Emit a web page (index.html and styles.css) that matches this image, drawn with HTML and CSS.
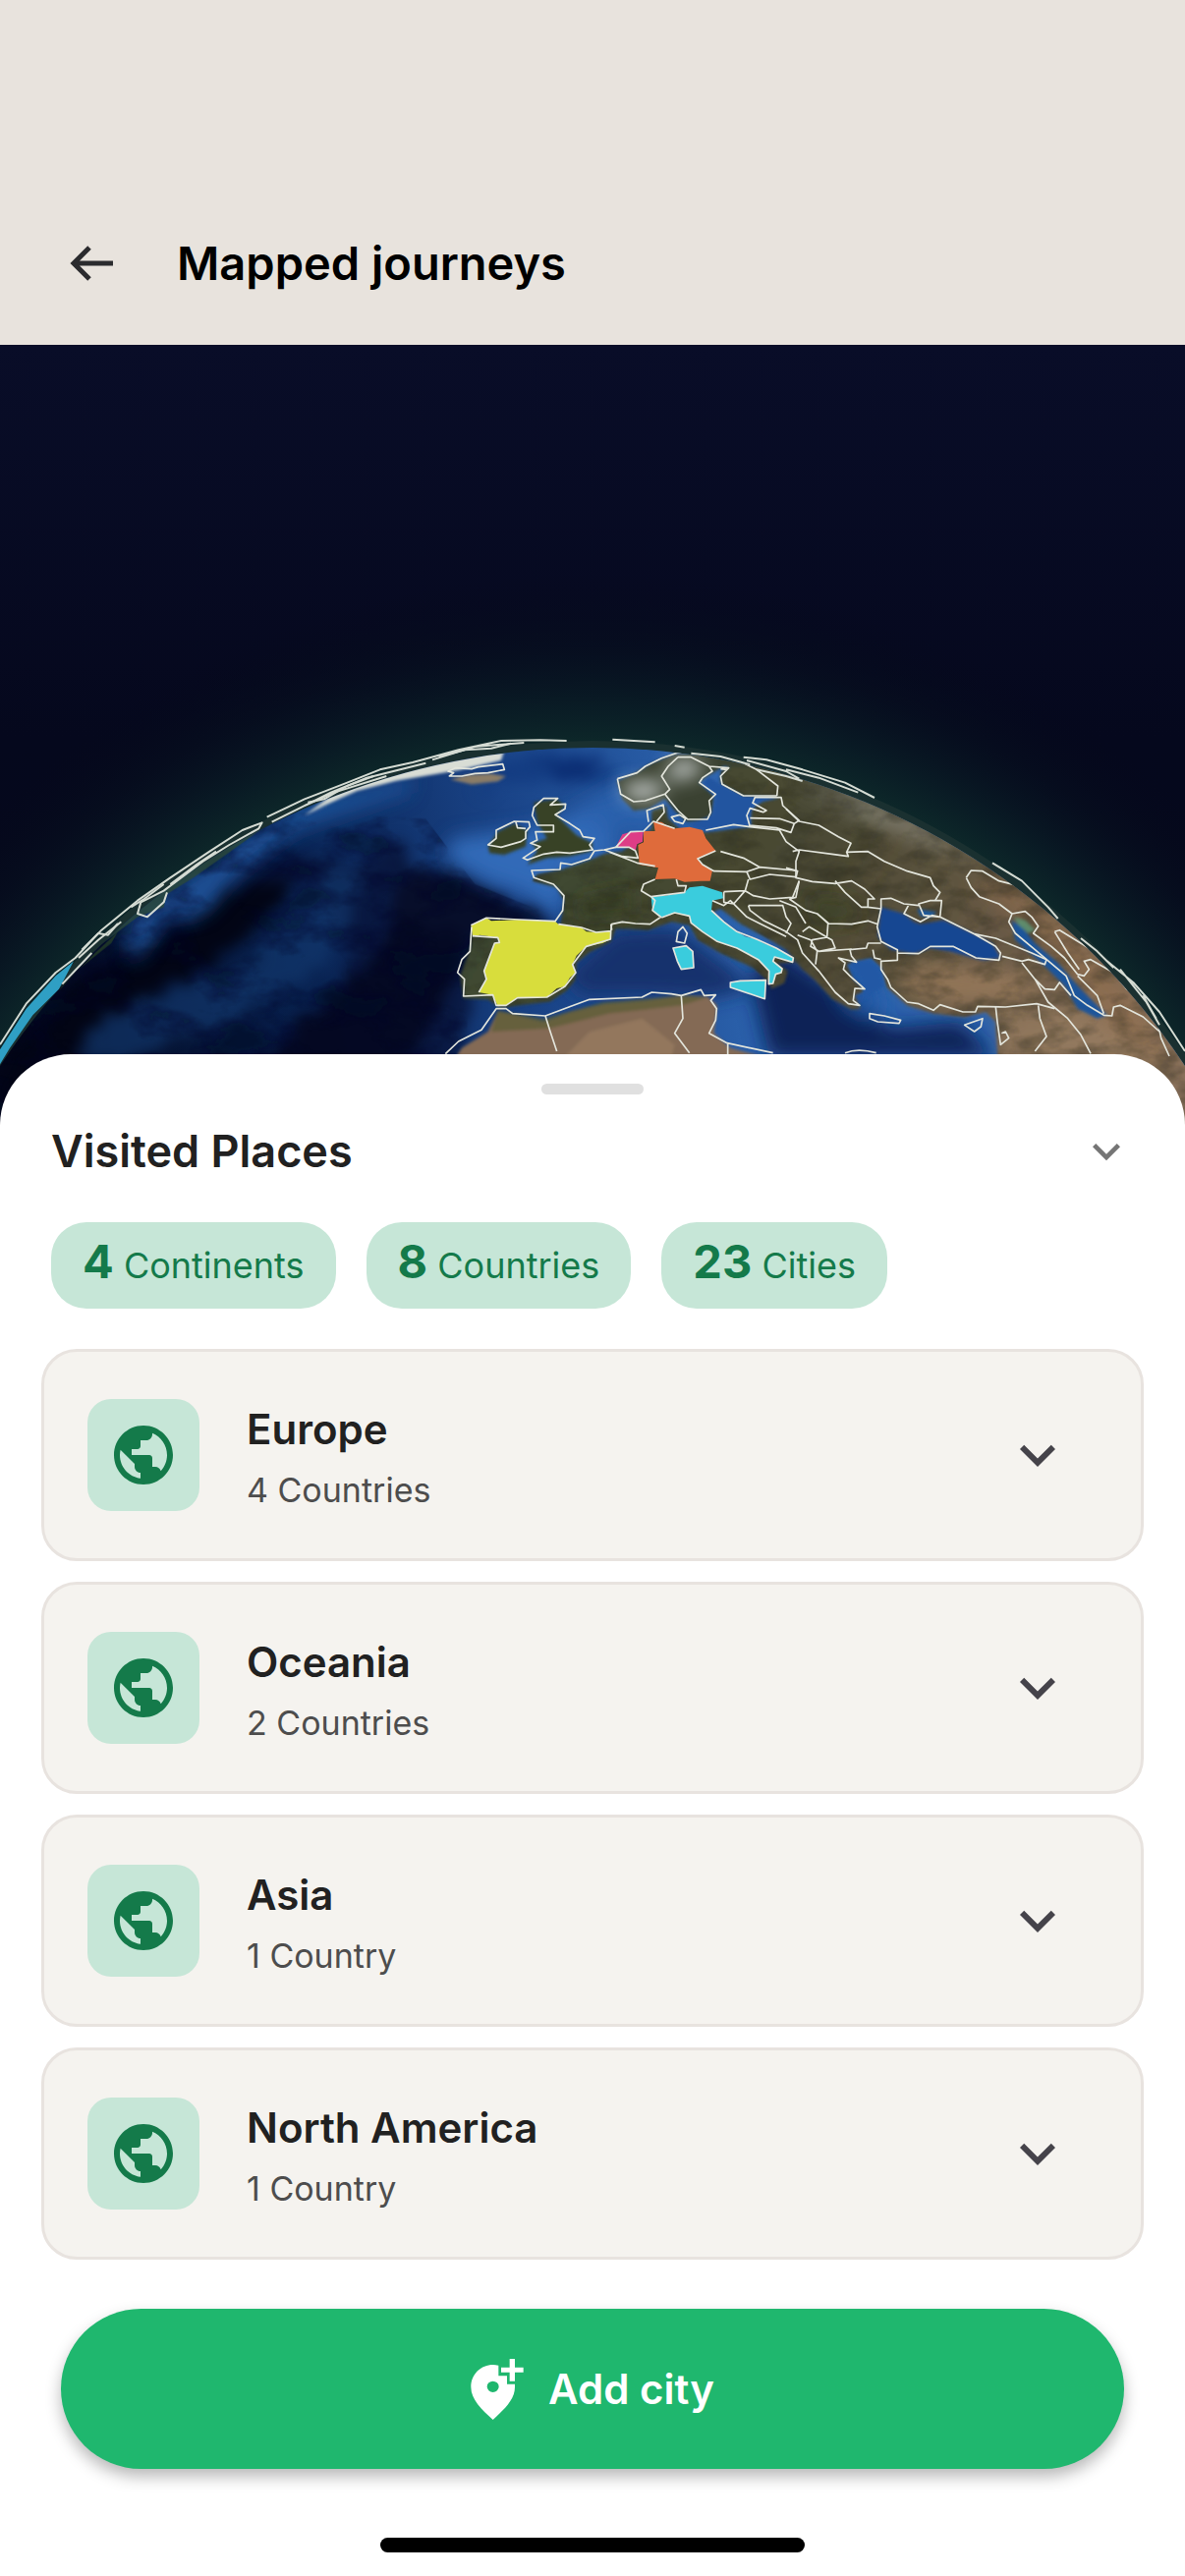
FILE: index.html
```html
<!DOCTYPE html>
<html lang="en">
<head>
  <meta charset="UTF-8" />
  <meta name="viewport" content="width=device-width, initial-scale=1.0"/>
  <title>Mapped journeys</title>
  <link rel="stylesheet" href="styles.css">
</head>

<body>

  <!-- Shared icons -->
  <svg class="sprite" aria-hidden="true">
    <symbol id="icon-globe" viewBox="0 0 24 24">
      <path d="M12 2C6.48 2 2 6.48 2 12s4.48 10 10 10 10-4.48 10-10S17.52 2 12 2zm-1 17.93c-3.95-.49-7-3.85-7-7.93 0-.62.08-1.21.21-1.79L9 15v1c0 1.1.9 2 2 2v1.93zm6.9-2.54c-.26-.81-1-1.39-1.9-1.39h-1v-3c0-.55-.45-1-1-1H8v-2h2c.55 0 1-.45 1-1V7h2c1.1 0 2-.9 2-2v-.41c2.93 1.19 5 4.06 5 7.41 0 2.08-.8 3.97-2.1 5.39z"/>
    </symbol>
    <symbol id="icon-chevron" viewBox="0 0 24 24">
      <path d="M16.59 8.59L12 13.17 7.41 8.59 6 10l6 6 6-6z"/>
    </symbol>
  </svg>

  <header class="app-bar">
    <a class="back-link" href="#" aria-label="Back">
      <svg viewBox="0 0 44 36"><path d="M20 2L4 18l16 16M4 18h40"/></svg>
    </a>
    <h1>Mapped journeys</h1>
  </header>

  <section class="globe" aria-label="Globe with visited countries">
    <svg viewBox="0 1053 3618 2400">
      <defs>
        <linearGradient id="sky" x1="0" y1="0" x2="0" y2="1">
          <stop offset="0" stop-color="#090d28"/>
          <stop offset=".5" stop-color="#05081d"/>
          <stop offset="1" stop-color="#05081a"/>
        </linearGradient>
        <radialGradient id="glow" gradientUnits="userSpaceOnUse" cx="1809" cy="4452" r="2700">
          <stop offset=".81" stop-color="#0d2729"/>
          <stop offset=".85" stop-color="#0a1e26" stop-opacity=".9"/>
          <stop offset=".92" stop-color="#07101f" stop-opacity=".6"/>
          <stop offset="1" stop-color="#05081a" stop-opacity="0"/>
        </radialGradient>
        <linearGradient id="ocean" gradientUnits="userSpaceOnUse" x1="0" y1="3000" x2="2200" y2="2500">
          <stop offset="0" stop-color="#030619"/>
          <stop offset=".4" stop-color="#08214f"/>
          <stop offset=".72" stop-color="#1a4488"/>
          <stop offset="1" stop-color="#2c63ae"/>
        </linearGradient>
        <linearGradient id="land" gradientUnits="userSpaceOnUse" x1="500" y1="100" x2="2300" y2="1000">
          <stop offset="0" stop-color="#3d4730"/>
          <stop offset=".45" stop-color="#4c4a34"/>
          <stop offset=".75" stop-color="#6b5b47"/>
          <stop offset="1" stop-color="#88705a"/>
        </linearGradient>
        <clipPath id="disc"><circle cx="1809" cy="4452" r="2169"/></clipPath>
        <filter id="soft" x="-20%" y="-20%" width="140%" height="140%"><feGaussianBlur stdDeviation="28"/></filter>
        <filter id="edge" x="-5%" y="-5%" width="110%" height="110%"><feGaussianBlur stdDeviation="5"/></filter>
        <filter id="rough" x="-10%" y="-10%" width="120%" height="120%" color-interpolation-filters="sRGB">
          <feTurbulence type="fractalNoise" baseFrequency=".02" numOctaves="4" seed="4"/>
          <feDisplacementMap in="SourceGraphic" scale="90" xChannelSelector="R" yChannelSelector="G"/>
          <feGaussianBlur stdDeviation="20"/>
        </filter>
        <filter id="terrain" x="0" y="0" width="100%" height="100%">
          <feTurbulence type="fractalNoise" baseFrequency=".01 .02" numOctaves="4" seed="9"/>
          <feColorMatrix values="0 0 0 0 .02  0 0 0 0 .02  0 0 0 0 .01  2 0 0 0 -.8"/>
          <feComposite in2="SourceGraphic" operator="in"/>
        </filter>
        <filter id="seabed" x="0" y="0" width="100%" height="100%">
          <feTurbulence type="fractalNoise" baseFrequency=".005 .009" numOctaves="5" seed="21"/>
          <feColorMatrix values="0 0 0 0 0  0 0 0 0 .003  0 0 0 0 .02  3 0 0 0 -1.3"/>
          <feComposite in2="SourceGraphic" operator="in"/>
        </filter>
      </defs>

      <rect y="1053" width="3618" height="2400" fill="url(#sky)"/>
      <rect y="1053" width="3618" height="2400" fill="url(#glow)"/>
      <circle cx="1809" cy="4452" r="2190" fill="#33423f" opacity=".35"/>

      <g clip-path="url(#disc)">
        <rect y="2200" width="3618" height="1300" fill="url(#ocean)"/>

        <!-- deep water and currents -->
        <g filter="url(#rough)">
          <path fill="#020515" d="M0 3300L200 3010 400 2890 560 2830 640 2760 680 2700 900 2640 860 2760 640 2960 460 3020 250 3170 100 3453H0z"/>
          <path fill="#081338" opacity=".8" d="M640 2700L820 2600 1120 2640 1180 2560 1250 2600 1220 2720 1350 2800 1650 2760 1690 2830 1440 3010 1400 3240 1330 3453 840 3453 880 3140 1050 3020 1060 2850 900 2700z"/>
          <path fill="#040820" opacity=".9" d="M850 3200L1000 3040 1130 2940 1210 2790 1500 2710 1640 2800 1440 2850 1380 3010 1300 3160 1250 3240 950 3300 700 3260z"/>
          <path fill="#070e2a" d="M1230 2640L1420 2670 1560 2740 1690 2810 1590 2830 1400 2860 1200 2800z"/>
          <path fill="#123a80" opacity=".8" d="M1500 2330L1720 2290 1880 2360 1830 2390 1640 2370 1450 2420z"/>
          <path fill="#0a2a70" opacity=".8" d="M1640 2320L1830 2320 1810 2380 1690 2380z"/>
          <path fill="#12396f" opacity=".65" d="M500 3040L740 2950 860 2820 960 2660 1100 2660 1080 2810 960 2970 700 3120 480 3200 250 3260 250 3180 400 3060z"/>
        </g>
        <g filter="url(#soft)">
          <path fill="#1d5094" d="M330 2830L560 2690 730 2560 940 2440 1260 2370 1250 2420 900 2540 720 2680 620 2790 500 2810 430 2920 390 2930 390 2860z"/>
          <path fill="#316bb8" d="M1380 2560L1620 2530 1810 2470 1890 2580 1850 2630 1740 2650 1710 2800 1600 2730 1480 2690 1360 2620z"/>
          <path fill="#2d64b0" opacity=".8" d="M1740 2480L1900 2390 2040 2420 2010 2540 1900 2530 1830 2560z"/>
          <path fill="#15316d" d="M1720 2980L1880 2840 2060 2830 2250 2970 2290 3020 2170 3050 1960 3040 1780 3040z"/>
          <path fill="#0b2356" d="M2290 2980L2380 2900 2550 3020 2720 3140 2930 3120 3040 3230H2350z"/>
          <path fill="#2259a4" d="M2520 2950L2620 2930 2690 3070 2650 3110 2580 3070z"/>
        </g>
        <path filter="url(#seabed)" opacity=".6" d="M0 3453V2900L500 2650 900 2480 1300 2500 1450 2700 1700 2800 1450 2850 1400 3453z"/>

        <!-- Greenland ice at the horizon -->
        <path fill="#d9ddd5" filter="url(#edge)" d="M930 2490L1010 2430 1140 2370 1260 2345 1420 2312 1540 2290 1530 2322 1400 2352 1210 2384 1090 2415 990 2460z"/>
        <path fill="#2c4a3b" opacity=".8" d="M330 2850L430 2750 560 2660 680 2590 800 2530 690 2610 590 2680 510 2730 500 2770 420 2800 300 2890z"/>
        <path fill="#2a4527" d="M190 3010L290 2910 360 2845 340 2880 240 2960 180 3025z" opacity=".7"/>

        <g transform="translate(1200 2190)">
          <g filter="url(#edge)">
            <path id="mass" fill="url(#land)" d="M425 500L500 520 522 560 512 630 480 640 285 635 240 660 238 700 205 790 215 858 290 862 330 888 380 880 480 868 530 835 558 800 560 750 600 718 665 685 680 645 780 650 850 625 905 635 930 680 1000 720 1100 765 1150 810 1155 830 1195 812 1205 775 1170 752 1232 748 1120 700 1075 675 1010 630 975 595 1000 585 1060 630 1130 668 1200 710 1250 770 1290 805 1340 860 1400 893 1428 890 1410 850 1440 835 1405 800 1385 755 1460 735 1490 765 1508 825 1570 880 1650 905 1745 915 1810 900 1840 930 1860 1300H2450V500L1700 100 1180 130 1090 120 1000 165 1000 205 1070 243 1182 245 1130 255 1090 285 1095 335 955 352 880 345 840 310 835 270 790 285 790 340 700 410 650 415 610 432 515 465 440 480z"/>
            <path fill="#3b4332" d="M685 195L700 250 735 285 780 280 830 250 860 285 895 318 960 318 975 290 980 240 935 200 960 180 1010 150 1200 160 1080 110 950 108 860 112 790 140 740 170z"/>
            <path fill="#394326" d="M430 260L500 250 525 270 500 300 560 360 610 385 605 410 540 425 470 430 410 450 440 410 425 385 470 370 440 320zM290 395L320 350 370 325 410 345 405 395 340 420 295 415z"/>
            <path fill="#8b7d66" d="M175 190L230 175 300 172 345 180 320 196 240 205z"/>
            <path fill="#846b54" d="M165 1080L210 1010 290 960 320 898 380 910 460 930 540 900 650 875 770 866 880 850 960 852 990 880 980 965 1030 1010 1180 1050 1200 1100z"/>
            <path fill="#5a5b35" opacity=".7" d="M320 895L460 920 640 870 880 850 960 855 880 880 660 905 480 950 300 960z"/>
            <path fill="#9c7f64" opacity=".6" d="M480 1080L600 960 760 920 860 1000 840 1080z"/>
          </g>

          <!-- snow, highlands and dry plateaus -->
          <g filter="url(#soft)">
            <path fill="#dfe3e4" opacity=".9" d="M700 205L800 195 835 225 770 255 710 240zM840 140L920 130 950 165 850 195z"/>
            <path fill="#a3a19a" opacity=".6" d="M1200 180L1420 240 1620 330 1800 450 1640 390 1440 310z"/>
            <path fill="#9b7c5c" opacity=".8" d="M1520 780L1640 750 1860 770 1960 800 1980 860 1740 880 1600 860z"/>
            <path fill="#94714f" opacity=".6" d="M1760 500L1900 520 2060 640 2250 840 2380 1060 2280 1060 2120 860 1960 660z"/>
            <path fill="#a08466" opacity=".6" d="M1850 900L2100 880 2360 1060H1870z"/>
            <path fill="#333c20" opacity=".6" d="M1260 540L1400 560 1430 620 1300 640zM560 560L740 520 740 600 570 620z"/>
          </g>
          <use href="#mass" filter="url(#terrain)" opacity=".5"/>

          <!-- inland seas -->
          <g filter="url(#edge)">
            <path fill="#174792" d="M1490 580L1560 600 1590 625 1610 632 1680 620 1760 655 1830 690 1855 735 1800 742 1700 715 1640 705 1590 722 1520 710 1480 670z"/>
            <path fill="#1c5a9c" d="M1600 585L1660 595 1640 612 1610 608z"/>
            <path fill="#1b549a" d="M1888 620L1920 640 1960 690 2030 750 2090 820 2140 870 2180 910 2150 920 2090 890 2050 820 1990 760 1900 680z"/>
            <path fill="#5e9a78" opacity=".8" d="M1895 610L1930 620 1960 650 1940 660 1910 635z"/>
            <path fill="#2455a0" d="M1000 205L1070 243 1175 245 1100 262 1085 330 1000 338 950 345 900 330 975 300 985 240 945 200 965 182z"/>
            <path fill="#2159a5" d="M1395 750L1455 740 1485 765 1500 820 1440 860 1430 800z"/>
          </g>

          <!-- visited countries -->
          <path fill="#d8dd3c" d="M238 635L285 613 300 622 385 618 495 623 505 632 575 642 590 655 620 657 665 653 664 678 640 690 590 700 560 728 548 755 558 780 540 795 525 822 500 828 470 855 380 857 345 880 320 883 305 848 262 840 285 800 278 775 290 745 310 690 325 688 320 673 265 665 243 670z"/>
          <path fill="#de3d86" d="M680 397L700 358 725 350 764 348 762 380 745 388 740 408 720 397z"/>
          <path fill="#df6b3b" d="M795 318L820 320 835 330 860 340 905 335 945 345 955 370 985 408 930 432 945 450 975 468 968 500 940 500 890 503 860 493 800 495 810 460 752 450 748 390 765 382 765 348 800 348z"/>
          <path fill="#3accdd" d="M788 548L830 545 860 540 890 535 905 520 945 515 1005 535 1008 553 975 560 972 590 1010 625 1050 655 1075 670 1110 678 1130 690 1170 705 1222 735 1220 748 1165 732 1160 745 1188 768 1185 780 1168 785 1160 813 1147 815 1148 775 1115 740 1050 705 990 685 945 655 910 628 905 607 860 597 820 612 792 590zM855 705L895 698 915 715 918 765 880 770 868 745zM1030 810L1060 805 1138 803 1135 860 1100 848 1030 825z"/>

          <g class="borders">
            <path d="M238 635L285 613 385 618 495 623 518 590 522 545 490 510 430 490 423 468 510 465 512 445 545 450 600 432 615 408 645 405 680 397M505 632L575 642 620 657 665 653 668 632 700 625 740 630 785 632 815 612M665 653L664 678 590 700 548 755 558 780 525 822 470 855 380 857 345 880 315 880 305 848 215 852 218 800 197 780 210 740 235 715 240 640M262 840L285 800 278 775 310 690 325 688 320 673 243 668"/>
            <path d="M440 330L425 300 430 275 460 248 503 248 480 268 527 265 525 280 495 298 540 325 570 345 580 365 615 370 600 390 610 405 540 415 500 412 460 418 410 436 397 430 450 395 420 385 440 375 435 350 490 350 490 330zM290 390L315 370 315 345 370 318 415 320 418 335 405 350 405 370 390 380 330 397zM375 320L380 338 405 340"/>
            <path d="M168 165L190 155 240 158 260 152 335 143 340 160 290 170 250 172 210 180 172 180 185 170z"/>
            <path d="M685 188L745 170 770 150 820 125 870 108 950 110 980 122 1050 130 1110 160 1175 210 1172 240M685 188L695 235 735 258 770 255 830 235 850 260 870 285 900 312 960 312 970 290 965 255 985 235 935 200 945 185 975 165 965 150 910 122 870 122M830 235L845 220 820 180 840 150 870 122M1000 158L1020 160M965 150L1025 155 1000 180 1005 205 1070 240 1172 240M780 320L775 285 825 267 828 290 805 318M850 305L875 298 893 310 885 325 860 318zM860 340L795 318 765 348 725 350 680 397 720 397 740 408 748 430 700 425 645 405M660 412L745 445 800 455"/>
            <path d="M955 345L1040 328 1090 335 1180 345 1200 380 1240 410 1230 440 1230 468 1120 458 1070 430 1000 410M1090 335L1080 300 1090 278 1130 290 1140 285 1098 262 1105 245 1185 245 1190 270 1240 315 1225 325 1180 310 1090 308M1090 330L1170 338 1215 352 1225 325M985 408L930 432 945 450 980 470 1080 472 1120 458M1230 468L1230 488 1150 480 1090 495 1080 472M1085 495L1075 530 1010 533M800 495L765 510 758 530 788 548 890 535 895 515 870 515 865 495M1075 530L1100 545 1150 555 1220 550 1240 500M1010 533L1010 565 1040 570 1075 530M975 560L1010 575 1030 560 1060 590 1080 610 1130 635 1200 670M1085 575L1190 575 1200 610 1215 630 1200 660M1085 575L1090 590 1130 620 1200 655M1180 560L1230 580 1260 630M870 655L885 640 898 660 890 690 865 685zM665 632L668 650M788 548L800 560 792 590 820 612"/>
            <path d="M855 705L895 698 915 715 918 765 880 770 868 745zM1030 810L1060 805 1138 803 1135 860 1100 848 1030 825zM972 590L1010 625 1050 655 1110 678 1170 705 1222 735 1220 748 1165 732 1160 745 1188 768 1185 780 1168 785 1160 813 1147 815 1148 775 1115 740 1050 705 990 685 945 655 910 628 905 607 860 597 820 612"/>
            <path d="M160 1028L200 990 270 955 315 890 345 890 365 905 465 912 480 960 500 1020M465 912L545 882 600 862 760 855 790 840 850 845 880 850 940 832 950 850 985 848 970 865 988 890 985 925 965 965 1020 995 1160 1025M880 850L885 920 860 965 905 1025M1022 995V1030"/>
            <path d="M1200 280L1240 318 1300 330 1360 365 1398 385 1385 412 1390 425 1340 418 1240 405 1220 410M1200 460L1235 470 1230 490 1280 502 1350 508 1400 500 1440 525 1470 555 1450 555 1450 580 1490 585 1490 555 1520 553 1560 570 1605 575M1385 412L1450 410 1500 440 1570 470 1640 490 1650 515 1670 535 1655 560 1675 560 1670 610 1620 605 1605 570 1640 560 1660 560M1350 500L1380 535 1430 580 1450 580M1240 500L1230 550 1210 555M1210 555L1260 590 1295 600 1330 630 1400 632 1450 622 1480 632M1490 585L1478 640 1490 685 1540 710 1540 742 1490 745 1490 770 1510 800 1520 825 1570 870 1605 875 1650 895 1670 878 1740 900 1778 900 1785 883 1870 885 1965 875 2020 890M1490 690L1450 690 1445 705 1395 710 1400 730 1415 748 1360 735 1380 750 1375 770 1395 790 1440 830 1410 828 1405 865 1425 880 1390 875 1350 840 1300 775 1250 720 1235 680 1200 655M1235 665L1275 680 1295 715 1290 755M1250 655L1270 640 1325 672 1280 680 1275 700 1300 715 1350 705 1340 680 1325 672 1328 630 1295 600M1300 715L1400 708M1540 720L1605 722 1640 700 1710 700 1780 735 1850 742 1855 720 1840 700 1775 662 1670 610 1645 605 1610 625 1560 600 1575 572M1775 662L1840 675 1950 720 1995 740 1990 755 1940 740 1920 745 1860 730M1465 710L1470 735 1490 740"/>
            <path d="M1750 490L1765 468 1800 470 1850 500 1910 515 1900 505 1825 455 1818 440 1850 450 1910 500 1970 545 2000 580 2025 615M1750 490L1765 520 1790 548 1850 570 1890 600 1930 593 1950 610 1970 638 1955 660 2010 700 2050 735 2090 785 2110 790 2125 770 2110 745 2130 740 2200 780 2240 830 2300 870 2330 910 2345 980 2370 1035M1890 600L1880 625 1900 660 1960 710 2055 790 2080 850 2120 880 2170 910 2195 912 2200 885 2220 880 2290 915 2340 960M2170 905L2150 850 2090 790M2020 655L2035 650 2140 715 2180 740 2220 790 2280 850 2340 930 2418 1020M2020 655L2060 720 2095 770M1920 750L1960 800 1990 830 2020 832 2035 810 2070 850M1960 800L2000 870 2060 920 2100 970 2130 1027M1970 880L1975 920 1995 975 1960 1020M1840 885L1845 930 1855 1000 1880 980 1870 960 1858 965"/>
            <path d="M1455 905L1500 912 1550 925 1545 935 1480 930 1455 920zM1745 940L1800 920 1795 945 1775 960zM1380 1025Q1420 1010 1475 1025"/>
          </g>
        </g>
      </g>

      <!-- horizon line -->
      <path fill="#2f9fc4" d="M0 3205L80 3080 170 2980 225 2935 180 3020 100 3100 30 3200 0 3250z"/>
      <g class="horizon">
        <path d="M0 3190L80 3065 170 2970 230 2925 310 2840 420 2750 520 2680 640 2600 740 2535 800 2512 790 2530 700 2580 620 2630 540 2690 500 2720 430 2755 420 2790 450 2800 500 2755 510 2725M240 2925L300 2870 370 2815M190 3005L280 2910M815 2495L930 2440 1060 2390 1160 2350 1260 2328 1400 2290 1530 2262 1650 2260 1730 2262M830 2510L910 2470 1010 2420 1120 2375 1300 2330M930 2460L1020 2420 1180 2370M1320 2320L1450 2280 1600 2268M1870 2258L2000 2266M2060 2277L2090 2282M2110 2300L2200 2310 2290 2335M2270 2312L2340 2320 2450 2350 2580 2390 2670 2436M2280 2322L2400 2355 2440 2378M2310 2350L2400 2370 2450 2385M2400 2350L2500 2375 2620 2420"/>
        <path d="M250 2900L300 2850 330 2855 360 2820M400 2770L440 2745 500 2700M520 2700L600 2640 660 2600M940 2450L990 2440 1060 2400 1140 2370M1340 2310L1420 2290 1500 2285 1560 2270"/>
        <path d="M3030 2635L3120 2690 3200 2770 3230 2805M3380 2935L3460 3000 3540 3090 3618 3210M3300 2865L3350 2905 3400 2955M3420 2960L3500 3060 3540 3130M3490 3040L3530 3110"/>
      </g>
    </svg>
  </section>

  <main class="sheet">
    <div class="handle"></div>

    <div class="sheet-header">
      <h2>Visited Places</h2>
      <button type="button" class="collapse-btn" aria-label="Collapse">
        <svg><use href="#icon-chevron"/></svg>
      </button>
    </div>

    <div class="stats">
      <span class="stat"><strong>4</strong> Continents</span>
      <span class="stat"><strong>8</strong> Countries</span>
      <span class="stat"><strong>23</strong> Cities</span>
    </div>

    <ul class="continents">
      <li>
        <button type="button" class="continent">
          <span class="badge"><svg><use href="#icon-globe"/></svg></span>
          <span class="info">
            <span class="name">Europe</span>
            <span class="count">4 Countries</span>
          </span>
          <svg class="chevron"><use href="#icon-chevron"/></svg>
        </button>
      </li>
      <li>
        <button type="button" class="continent">
          <span class="badge"><svg><use href="#icon-globe"/></svg></span>
          <span class="info">
            <span class="name">Oceania</span>
            <span class="count">2 Countries</span>
          </span>
          <svg class="chevron"><use href="#icon-chevron"/></svg>
        </button>
      </li>
      <li>
        <button type="button" class="continent">
          <span class="badge"><svg><use href="#icon-globe"/></svg></span>
          <span class="info">
            <span class="name">Asia</span>
            <span class="count">1 Country</span>
          </span>
          <svg class="chevron"><use href="#icon-chevron"/></svg>
        </button>
      </li>
      <li>
        <button type="button" class="continent">
          <span class="badge"><svg><use href="#icon-globe"/></svg></span>
          <span class="info">
            <span class="name">North America</span>
            <span class="count">1 Country</span>
          </span>
          <svg class="chevron"><use href="#icon-chevron"/></svg>
        </button>
      </li>
    </ul>

    <button type="button" class="add-btn">
      <svg viewBox="0 0 160 186">
        <path fill-rule="evenodd" d="M67 18Q75 18 84 20V52H110V77H134V86C134 124 101 154 67 186 33 154 0 124 0 86 0 46 31 18 67 18zM67 68a18 17 0 1 0 0 34 18 17 0 1 0 0-34z"/>
        <path d="M118 0h16v26h26v15h-26v27h-16V41H92V26h26z"/>
      </svg>
      Add city
    </button>

    <div class="home-bar"></div>
  </main>

</body>
</html>
```
FILE: styles.css
```css
* {
  box-sizing: border-box;
}

body {
  margin: 0;
  background-color: #fff;
  font-family: Inter, "Liberation Sans", sans-serif;
  color: #212121;
}

h1, h2, ul {
  margin: 0;
  padding: 0;
}

button {
  border: none;
  font-family: inherit;
  color: inherit;
  cursor: pointer;
}

svg {
  display: block;
  fill: currentColor;
}

.sprite {
  display: none;
}

/* App bar */
.app-bar {
  display: flex;
  align-items: center;
  gap: 64px;
  padding: 236px 70px 51px;
  background-color: #e8e3dd;
}

.back-link {
  color: #2b2b2e;
}

.back-link svg {
  width: 46px;
  height: 36px;
  fill: none;
  stroke: currentColor;
  stroke-width: 5;
}

.app-bar h1 {
  font-size: 47px;
  font-weight: 600;
  line-height: 64px;
  color: #000;
}

/* Globe */
.globe {
  background-color: #05081a;
}

.globe svg {
  width: 100%;
  height: auto;
}

.borders {
  fill: none;
  stroke: #e3e5dc;
  stroke-width: 5;
  stroke-linejoin: round;
}

.horizon {
  fill: none;
  stroke: #d5dbd3;
  stroke-width: 6;
  stroke-linejoin: round;
}

/* Bottom sheet */
.sheet {
  position: relative;
  margin-top: -78px;
  padding: 30px 42px 24px;
  border-radius: 72px 72px 0 0;
  background-color: #fff;
}

.handle {
  width: 104px;
  height: 11px;
  margin: 0 auto;
  border-radius: 6px;
  background-color: #e0e0e0;
}

.sheet-header {
  display: flex;
  justify-content: space-between;
  align-items: center;
  padding: 30px 10px 0 10px;
}

.sheet-header h2 {
  font-size: 45px;
  font-weight: 600;
  line-height: 56px;
}

.collapse-btn {
  padding: 0;
  background: none;
  color: #757575;
}

.collapse-btn svg {
  width: 56px;
  height: 56px;
}

.stats {
  display: flex;
  gap: 31px;
  padding: 44px 10px 41px;
}

.stat {
  padding: 0 32px;
  border-radius: 36px;
  background-color: #c6e6d7;
  color: #147a4a;
  font-size: 36px;
  line-height: 88px;
}

.stat strong {
  font-size: 47px;
  font-weight: 700;
  line-height: 1;
}

.continents {
  display: flex;
  flex-direction: column;
  gap: 21px;
  list-style: none;
}

.continent {
  display: flex;
  align-items: center;
  width: 100%;
  height: 216px;
  padding: 0 69px 0 44px;
  border: 3px solid #e8e3df;
  border-radius: 36px;
  background-color: #f5f3ef;
  text-align: left;
}

.badge {
  display: flex;
  align-items: center;
  justify-content: center;
  width: 114px;
  height: 114px;
  border-radius: 24px;
  background-color: #c6e6d7;
  color: #147a4a;
}

.badge svg {
  width: 72px;
  height: 72px;
}

.info {
  display: flex;
  flex: 1;
  flex-direction: column;
  gap: 12px;
  padding-top: 8px;
  padding-left: 48px;
}

.name {
  font-size: 42px;
  font-weight: 600;
  line-height: 52px;
}

.count {
  font-size: 34px;
  line-height: 48px;
  color: #4d4d4d;
}

.chevron {
  width: 72px;
  height: 72px;
  color: #45434a;
}

.add-btn {
  display: flex;
  align-items: center;
  justify-content: center;
  gap: 25px;
  width: calc(100% - 40px);
  height: 163px;
  margin: 50px auto 70px;
  border-radius: 82px;
  background-color: #1fb76e;
  box-shadow: 0 8px 16px rgba(0, 0, 0, 0.28);
  color: #fff;
  font-size: 42px;
  font-weight: 600;
}

.add-btn svg {
  width: 54px;
  height: 62px;
}

.home-bar {
  width: 432px;
  height: 15px;
  margin: 0 auto;
  border-radius: 8px;
  background-color: #000;
}
```
